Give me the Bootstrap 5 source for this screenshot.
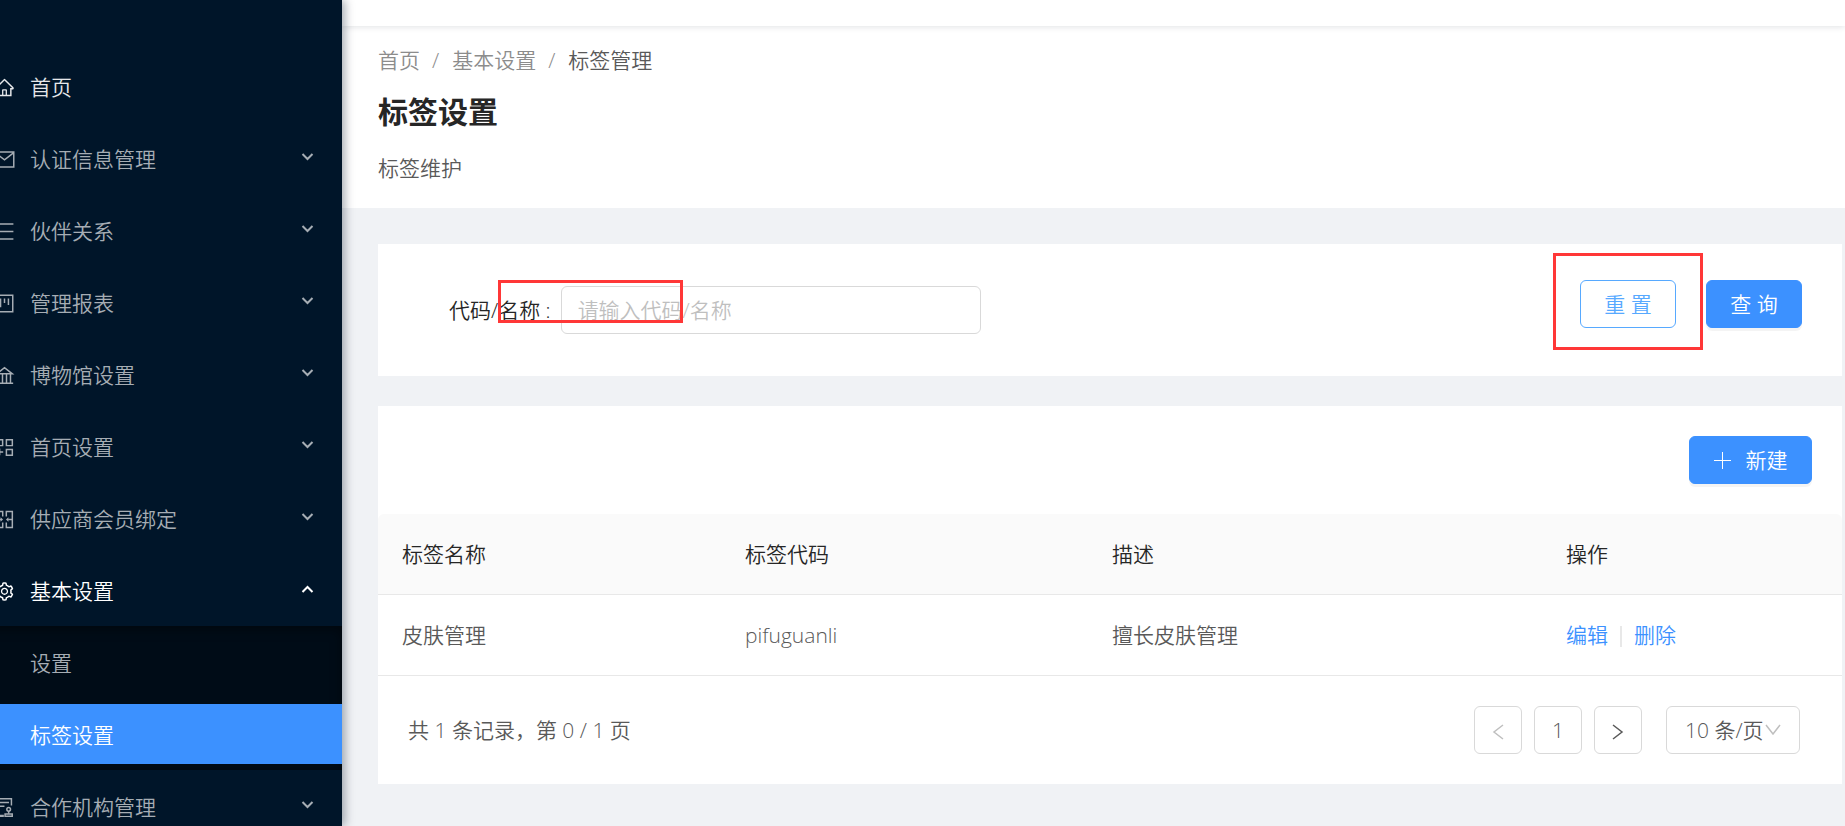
<!DOCTYPE html>
<html lang="zh-CN">
<head>
<meta charset="utf-8">
<meta name="viewport" content="width=device-width, initial-scale=1">
<title>标签设置</title>
<link href="https://cdn.jsdelivr.net/npm/bootstrap@5.3.0/dist/css/bootstrap.min.css" rel="stylesheet">
<style>
  :root { --accent: #3c91ff; --line: #d9d9d9; --rule: #e8e8e8; }
  body {
    font-family: "Open Sans", "Noto Sans CJK SC", sans-serif;
    font-size: 21px; line-height: 33px; font-weight: 350;
    color: #595959; background: #f0f2f5;
  }
  a { text-decoration: none; }

  /* sidebar */
  .side { width: 342px; height: 100vh; top: 0; z-index: 5; overflow: hidden; background: #001529; padding-top: 50px; }
  .side-wrap { box-shadow: 3px 0 9px rgba(0, 21, 41, .35); z-index: 5; }
  .side ul { list-style: none; margin: 0; padding: 0; }
  .side li { padding: 6px 0; }
  .side li.has-sub { padding-bottom: 0; }
  .side-link { height: 60px; padding-right: 28px; color: #a6adb4; }
  .side-link span { padding-left: 15px; padding-top: 2px; }
  .side-link .ico { margin-left: -6px; margin-top: 2px; }
  .side-link .arrow { margin-left: auto; margin-bottom: 2px; }
  .side-link.bright, .side-link:hover { color: #fff; }
  .side-link.home { color: #e6e8ea; }
  .side .submenu { background: #000c17; margin: 6px 0 0 -15px; box-shadow: inset 0 3px 12px rgba(0, 0, 0, .45); }
  .submenu .side-link { padding-left: 30px; }
  .submenu .side-link.current { background: var(--accent); color: #fff; }
  .ico { width: 21px; height: 21px; flex: none; }
  .arrow { width: 13px; height: 10px; flex: none; }
  .line-ico { fill: none; stroke: currentColor; stroke-width: 72; }

  /* header */
  .topbar { height: 26px; background: #fff; box-shadow: 0 1px 6px rgba(0, 21, 41, .12); position: relative; }
  .page-head { background: #fff; padding: 18px 36px 23px; }
  .breadcrumb { --bs-breadcrumb-item-padding-x: 12px; --bs-breadcrumb-divider-color: #8c8c8c; margin-bottom: 11px; }
  .breadcrumb-item + .breadcrumb-item::before { padding-right: 13px; }
  .breadcrumb a { color: #8c8c8c; }
  .breadcrumb .active { color: #595959; }
  .page-head h1 { font-size: 30px; line-height: 48px; font-weight: 700; color: #262626; margin-bottom: 16px; }

  .content { padding: 36px 3px 36px 36px; }
  .panel { background: #fff; }
  .filter { padding: 36px 40px 42px 71px; margin-bottom: 30px; position: relative; }
  .filter .field { margin-top: 6px; min-width: 0; }
  .filter label { color: #262626; padding-right: 10px; white-space: nowrap; }
  .filter .form-control { width: 420px; height: 48px; border-color: var(--line); border-radius: 6px; padding: 4px 16px; font: inherit; }
  .filter .form-control::placeholder { color: #bfbfbf; }
  .btn {
    --bs-btn-font-size: 21px; --bs-btn-line-height: 33px; --bs-btn-font-weight: 350; --bs-btn-border-radius: 6px;
    --bs-btn-padding-y: 4px; --bs-btn-padding-x: 20px; height: 48px; min-width: 96px; white-space: nowrap;
  }
  .btn-primary { --bs-btn-bg: var(--accent); --bs-btn-border-color: var(--accent); box-shadow: 0 3px 0 rgba(0, 0, 0, .045); }
  .btn-reset { --bs-btn-color: #57a9ff; --bs-btn-border-color: #57a9ff; --bs-btn-bg: #fff; --bs-btn-hover-color: var(--accent); --bs-btn-hover-border-color: var(--accent); }
  .note { position: absolute; border: 3px solid #ff3737; pointer-events: none; z-index: 2; }
  .note-field { left: 120px; top: 36px; width: 185px; height: 43px; }
  .note-reset { inset: -27px -27px -22px; }

  .toolbar { padding: 30px; }
  .btn-new { width: 123px; padding: 0; gap: 15px; }
  .data { --bs-table-color: #595959; --bs-table-bg: transparent; table-layout: fixed; margin: 0; border-collapse: separate; border-spacing: 0; }
  .data > :not(caption) > * > * { height: 81px; padding: 0 24px; border-bottom: 1px solid var(--rule); vertical-align: middle; }
  .data th { background: #fafafa; color: #262626; font-weight: 350; }
  .data th:first-child { border-top-left-radius: 6px; }
  .data th:last-child { border-top-right-radius: 6px; }
  .data td a { color: var(--accent); }
  .data .vr { width: 2px; height: 19px; margin: 0 12px; background: var(--rule); opacity: 1; vertical-align: middle; }
  .foot { padding: 30px 42px 30px 30px; }
  .pagination { gap: 12px; }
  .page-btn { width: 48px; height: 48px; border: 1px solid var(--line); border-radius: 6px; background: #fff; color: #595959; padding: 0; font: inherit; }
  .page-btn:disabled { color: #bfbfbf; }
  .page-size {
    width: 134px; height: 48px; margin-left: 12px; border-color: var(--line); border-radius: 6px; color: #595959;
    font: inherit; padding: 4px 0 4px 18px;
    background-image: url("data:image/svg+xml,%3csvg xmlns='http://www.w3.org/2000/svg' viewBox='0 0 16 12'%3e%3cpath fill='none' stroke='%23bfbfbf' stroke-width='1.5' d='M1 1l7 9 7-9'/%3e%3c/svg%3e");
    background-size: 16px 12px; background-position: right 18px center;
  }
</style>
</head>
<body>
<div class="d-flex min-vh-100">
  <div class="side-wrap flex-shrink-0 position-relative">
  <nav class="side position-sticky" aria-label="主菜单">
    <ul>
      <li><a href="#" class="side-link home d-flex align-items-center">
        <svg class="ico" viewBox="0 0 1024 1024" fill="currentColor"><path d="M946.5 505L560.1 118.8l-25.9-25.9a31.5 31.5 0 0 0-44.4 0L77.5 505a63.9 63.9 0 0 0-18.8 46c.4 35.2 29.7 63.3 64.9 63.3h42.5V940h691.8V614.3h43.4c17.1 0 33.2-6.7 45.3-18.8a63.6 63.6 0 0 0 18.7-45.3c0-17-6.7-33.1-18.8-45.2zM568 868H456V664h112v204zm217.9-325.7V868H632V640c0-22.1-17.9-40-40-40H432c-22.1 0-40 17.9-40 40v228H238.1V542.3h-96l370-369.7 23.1 23.1L882 542.3h-96.1z"/></svg>
        <span>首页</span></a></li>
      <li><a href="#" class="side-link d-flex align-items-center">
        <svg class="ico line-ico" viewBox="0 0 1024 1024"><path d="M60 150h904v724H60zM90 200l422 330 422-330"/></svg>
        <span>认证信息管理</span><svg class="arrow" viewBox="0 0 13 10"><path d="M1.500 2l5 5 5-5" fill="none" stroke="currentColor" stroke-width="2"/></svg></a></li>
      <li><a href="#" class="side-link d-flex align-items-center">
        <svg class="ico line-ico" viewBox="0 0 1024 1024"><path d="M110 150h836M110 512h836M110 874h836"/></svg>
        <span>伙伴关系</span><svg class="arrow" viewBox="0 0 13 10"><path d="M1.500 2l5 5 5-5" fill="none" stroke="currentColor" stroke-width="2"/></svg></a></li>
      <li><a href="#" class="side-link d-flex align-items-center">
        <svg class="ico line-ico" viewBox="0 0 1024 1024"><path d="M110 110h804v804H110zM320 270v420M512 270v220M704 270v320"/></svg>
        <span>管理报表</span><svg class="arrow" viewBox="0 0 13 10"><path d="M1.500 2l5 5 5-5" fill="none" stroke="currentColor" stroke-width="2"/></svg></a></li>
      <li><a href="#" class="side-link d-flex align-items-center">
        <svg class="ico line-ico" viewBox="0 0 1024 1024"><path d="M90 890h844M130 430h764L512 130zM220 430v440M414 430v440M610 430v440M804 430v440"/></svg>
        <span>博物馆设置</span><svg class="arrow" viewBox="0 0 13 10"><path d="M1.500 2l5 5 5-5" fill="none" stroke="currentColor" stroke-width="2"/></svg></a></li>
      <li><a href="#" class="side-link d-flex align-items-center">
        <svg class="ico line-ico" viewBox="0 0 1024 1024"><path d="M130 130h290v290H130zM604 130h290v290H604zM604 604h290v290H604zM100 726h348M274 560v334"/></svg>
        <span>首页设置</span><svg class="arrow" viewBox="0 0 13 10"><path d="M1.500 2l5 5 5-5" fill="none" stroke="currentColor" stroke-width="2"/></svg></a></li>
      <li><a href="#" class="side-link d-flex align-items-center">
        <svg class="ico line-ico" viewBox="0 0 1024 1024"><path d="M424 370V120H130v784h294V654M600 370V120h294v784H600V654M190 512h150M690 512h204"/><path d="M320 400l120 112-120 112zM704 400L584 512l120 112z" fill="currentColor" stroke="none"/></svg>
        <span>供应商会员绑定</span><svg class="arrow" viewBox="0 0 13 10"><path d="M1.500 2l5 5 5-5" fill="none" stroke="currentColor" stroke-width="2"/></svg></a></li>
      <li class="has-sub"><a href="#" class="side-link bright d-flex align-items-center" aria-expanded="true">
        <svg class="ico" viewBox="0 0 1024 1024" fill="currentColor"><path d="M924.8 625.7l-65.5-56c3.1-19 4.7-38.4 4.7-57.8s-1.6-38.8-4.7-57.8l65.5-56a32.03 32.03 0 0 0 9.3-35.2l-.9-2.6a443.74 443.74 0 0 0-79.7-137.9l-1.8-2.1a32.12 32.12 0 0 0-35.1-9.500l-81.3 28.9c-30-24.6-63.5-44-99.7-57.6l-15.7-85a32.05 32.05 0 0 0-25.8-25.7l-2.7-.5c-52.1-9.4-106.9-9.4-159 0l-2.7.5a32.05 32.05 0 0 0-25.8 25.7l-15.8 85.4a351.86 351.86 0 0 0-99 57.4l-81.9-29.1a32 32 0 0 0-35.1 9.5l-1.8 2.1a446.02 446.02 0 0 0-79.7 137.9l-.9 2.6c-4.5 12.5-.8 26.5 9.3 35.2l66.3 56.6c-3.1 18.8-4.6 38-4.6 57.1 0 19.2 1.5 38.4 4.6 57.1L99 625.5a32.03 32.03 0 0 0-9.3 35.2l.9 2.6c18.1 50.4 44.9 96.9 79.7 137.9l1.8 2.1a32.12 32.12 0 0 0 35.1 9.5l81.9-29.1c29.8 24.5 63.1 43.9 99 57.4l15.8 85.4a32.05 32.05 0 0 0 25.8 25.7l2.7.5a449.4 449.4 0 0 0 159 0l2.7-.5a32.05 32.05 0 0 0 25.8-25.7l15.7-85a350 350 0 0 0 99.7-57.6l81.3 28.9a32 32 0 0 0 35.1-9.5l1.8-2.1c34.8-41.1 61.6-87.5 79.7-137.9l.9-2.6c4.5-12.3.8-26.3-9.3-35zM788.3 465.9c2.5 15.1 3.8 30.6 3.8 46.1s-1.3 31-3.8 46.1l-6.6 40.1 74.7 63.9a370.03 370.03 0 0 1-42.6 73.6L721 702.8l-31.4 25.8c-23.9 19.6-50.5 35-79.3 45.8l-38.1 14.3-17.9 97a377.5 377.5 0 0 1-85 0l-17.9-97.2-37.8-14.5c-28.5-10.8-55-26.2-78.7-45.7l-31.4-25.9-93.4 33.2c-17-22.9-31.2-47.6-42.6-73.6l75.5-64.5-6.5-40c-2.4-14.9-3.7-30.3-3.7-45.5 0-15.3 1.2-30.6 3.7-45.5l6.5-40-75.5-64.5c11.3-26.1 25.6-50.7 42.6-73.6l93.4 33.2 31.4-25.9c23.7-19.5 50.2-34.9 78.7-45.7l37.9-14.3 17.9-97.2c28.1-3.2 56.8-3.2 85 0l17.9 97 38.1 14.3c28.7 10.8 55.4 26.2 79.3 45.8l31.4 25.8 92.8-32.9c17 22.9 31.2 47.6 42.6 73.6L781.8 426l6.5 39.9zM512 326c-97.2 0-176 78.8-176 176s78.8 176 176 176 176-78.8 176-176-78.8-176-176-176zm79.2 255.2A111.6 111.6 0 0 1 512 614c-29.9 0-58-11.7-79.2-32.8A111.6 111.6 0 0 1 400 502c0-29.9 11.7-58 32.8-79.2C454 401.6 482.1 390 512 390c29.9 0 58 11.6 79.2 32.8A111.6 111.6 0 0 1 624 502c0 29.9-11.7 58-32.8 79.2z"/></svg>
        <span>基本设置</span><svg class="arrow" viewBox="0 0 13 10"><path d="M1.500 8l5-5 5 5" fill="none" stroke="currentColor" stroke-width="2"/></svg></a>
        <ul class="submenu">
          <li><a href="#" class="side-link d-flex align-items-center"><span>设置</span></a></li>
          <li><a href="#" class="side-link current d-flex align-items-center" aria-current="page"><span>标签设置</span></a></li>
        </ul></li>
      <li><a href="#" class="side-link d-flex align-items-center">
        <svg class="ico line-ico" viewBox="0 0 1024 1024"><path d="M480 934H130V90h720v330M290 270h440M290 450h220M290 900h190M540 934h350v-110H540z"/><circle cx="715" cy="600" r="90"/><path d="M715 690v130"/></svg>
        <span>合作机构管理</span><svg class="arrow" viewBox="0 0 13 10"><path d="M1.500 2l5 5 5-5" fill="none" stroke="currentColor" stroke-width="2"/></svg></a></li>
    </ul>
  </nav>
  </div>

  <div class="flex-grow-1" style="min-width:0">
    <div class="topbar"></div>
    <header class="page-head">
      <nav aria-label="breadcrumb">
        <ol class="breadcrumb">
          <li class="breadcrumb-item"><a href="#">首页</a></li>
          <li class="breadcrumb-item"><a href="#">基本设置</a></li>
          <li class="breadcrumb-item active" aria-current="page">标签管理</li>
        </ol>
      </nav>
      <h1>标签设置</h1>
      <div>标签维护</div>
    </header>

    <main class="content">
      <form class="panel filter d-flex align-items-start justify-content-between">
        <div class="field d-flex align-items-center">
          <label for="code">代码/名称 :</label>
          <input id="code" class="form-control" type="text" placeholder="请输入代码/名称">
        </div>
        <div class="d-flex" style="gap:30px">
          <div class="position-relative">
            <button type="reset" class="btn btn-reset">重 置</button>
            <div class="note note-reset"></div>
          </div>
          <button type="button" class="btn btn-primary">查 询</button>
        </div>
        <div class="note note-field"></div>
      </form>

      <section class="panel">
        <div class="toolbar d-flex justify-content-end">
          <button type="button" class="btn btn-primary btn-new d-flex align-items-center justify-content-center">
            <svg width="17" height="17" viewBox="0 0 17 17"><path d="M8.500 0v17M0 8.500h17" stroke="currentColor" stroke-width="1"/></svg>新建</button>
        </div>
        <table class="table data">
          <colgroup><col style="width:23.43%"><col style="width:25.07%"><col style="width:31.01%"><col></colgroup>
          <thead><tr><th>标签名称</th><th>标签代码</th><th>描述</th><th>操作</th></tr></thead>
          <tbody><tr><td>皮肤管理</td><td>pifuguanli</td><td>擅长皮肤管理</td>
            <td><a href="#">编辑</a><span class="vr"></span><a href="#">删除</a></td></tr></tbody>
        </table>
        <div class="foot d-flex align-items-center justify-content-between">
          <div>共 1 条记录，第 0 / 1 页</div>
          <div class="pagination m-0">
            <button class="page-btn" type="button" disabled aria-label="上一页"><svg width="12" height="16" viewBox="0 0 12 16"><path d="M11 1L2 8l9 7" fill="none" stroke="currentColor" stroke-width="1.500"/></svg></button>
            <button class="page-btn" type="button">1</button>
            <button class="page-btn" type="button" aria-label="下一页"><svg width="12" height="16" viewBox="0 0 12 16"><path d="M1 1l9 7-9 7" fill="none" stroke="currentColor" stroke-width="1.500"/></svg></button>
            <select class="form-select page-size" aria-label="每页条数"><option>10 条/页</option></select>
          </div>
        </div>
      </section>
    </main>
  </div>
</div>
<script src="https://cdn.jsdelivr.net/npm/bootstrap@5.3.0/dist/js/bootstrap.bundle.min.js"></script>
</body>
</html>
